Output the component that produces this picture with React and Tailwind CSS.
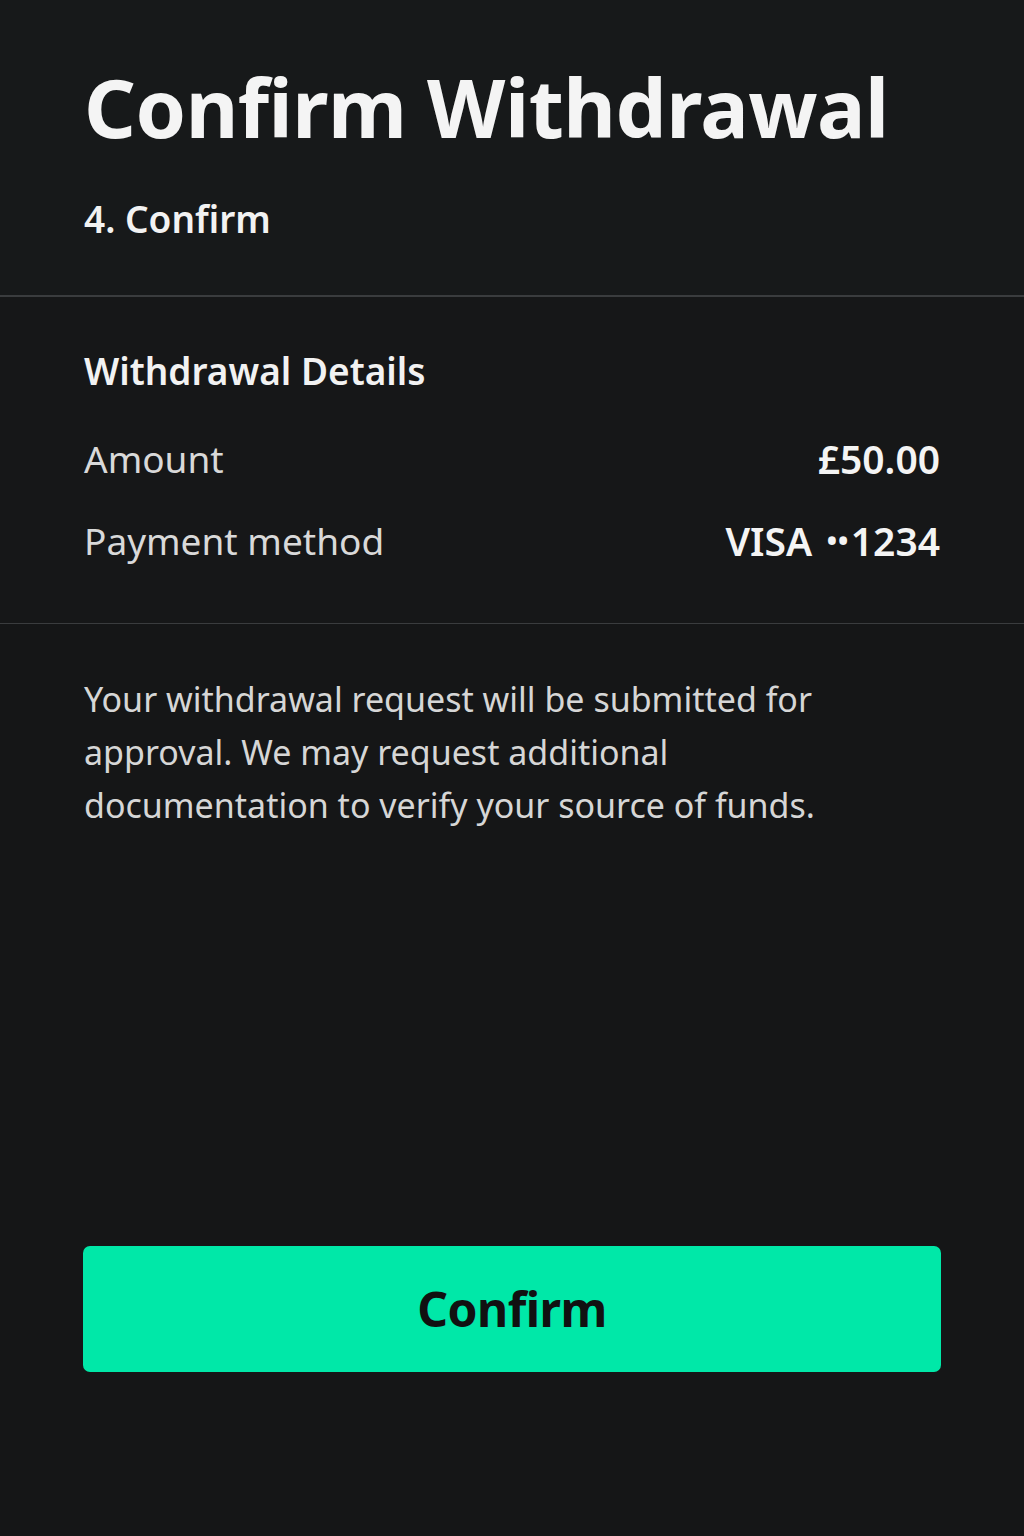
export default function App() {
  return (
    <div
      className="flex flex-col min-h-[1536px] bg-[#151617] text-white"
      style={{ fontFamily: '"Noto Sans", "Open Sans", sans-serif' }}
    >
      <header className="px-[84px] pt-[60px] pb-[53px] bg-[#17191a]">
        <h1 className="text-[81px] font-bold leading-[1.15] tracking-[-0.5px] text-[#f4f4f4]">
          Confirm Withdrawal
        </h1>
        <p className="mt-[43px] text-[37px] font-semibold leading-tight text-[#f2f2f2]">
          4. Confirm
        </p>
      </header>

      <div className="border-t-2 border-[#3a3c3e]" />

      <section className="px-[84px] pt-[51px] pb-[59px] bg-[#161718]">
        <h2 className="text-[37px] font-semibold leading-tight text-[#f2f2f2]">
          Withdrawal Details
        </h2>
        <div className="mt-[41px] flex flex-col gap-[36px]">
          <div className="flex items-center justify-between">
            <span className="text-[37px] leading-[46px] text-[#d9d9d9]">Amount</span>
            <span className="text-[39px] leading-[46px] font-semibold text-[#f4f4f4]">£50.00</span>
          </div>
          <div className="flex items-center justify-between">
            <span className="text-[37px] leading-[46px] text-[#d9d9d9]">Payment method</span>
            <span className="flex items-center text-[39px] leading-[46px] font-semibold text-[#f4f4f4]">
              VISA
              <span className="ml-[14px] mr-[2px] text-[30px] tracking-[0px]">••</span>
              1234
            </span>
          </div>
        </div>
      </section>

      <div className="border-t border-[#3a3c3e]" />

      <p className="px-[84px] pt-[49px] max-w-[900px] text-[34px] leading-[53px] text-[#d6d6d6]">
        Your withdrawal request will be submitted for approval. We may request additional
        documentation to verify your source of funds.
      </p>

      <div className="flex-1" />

      <div className="px-[83px] pb-[164px]">
        <button className="w-full h-[126px] rounded-[7px] bg-[#00e8a8] text-[48px] font-bold text-[#111] tracking-[-0.5px]">
          Confirm
        </button>
      </div>
    </div>
  );
}
